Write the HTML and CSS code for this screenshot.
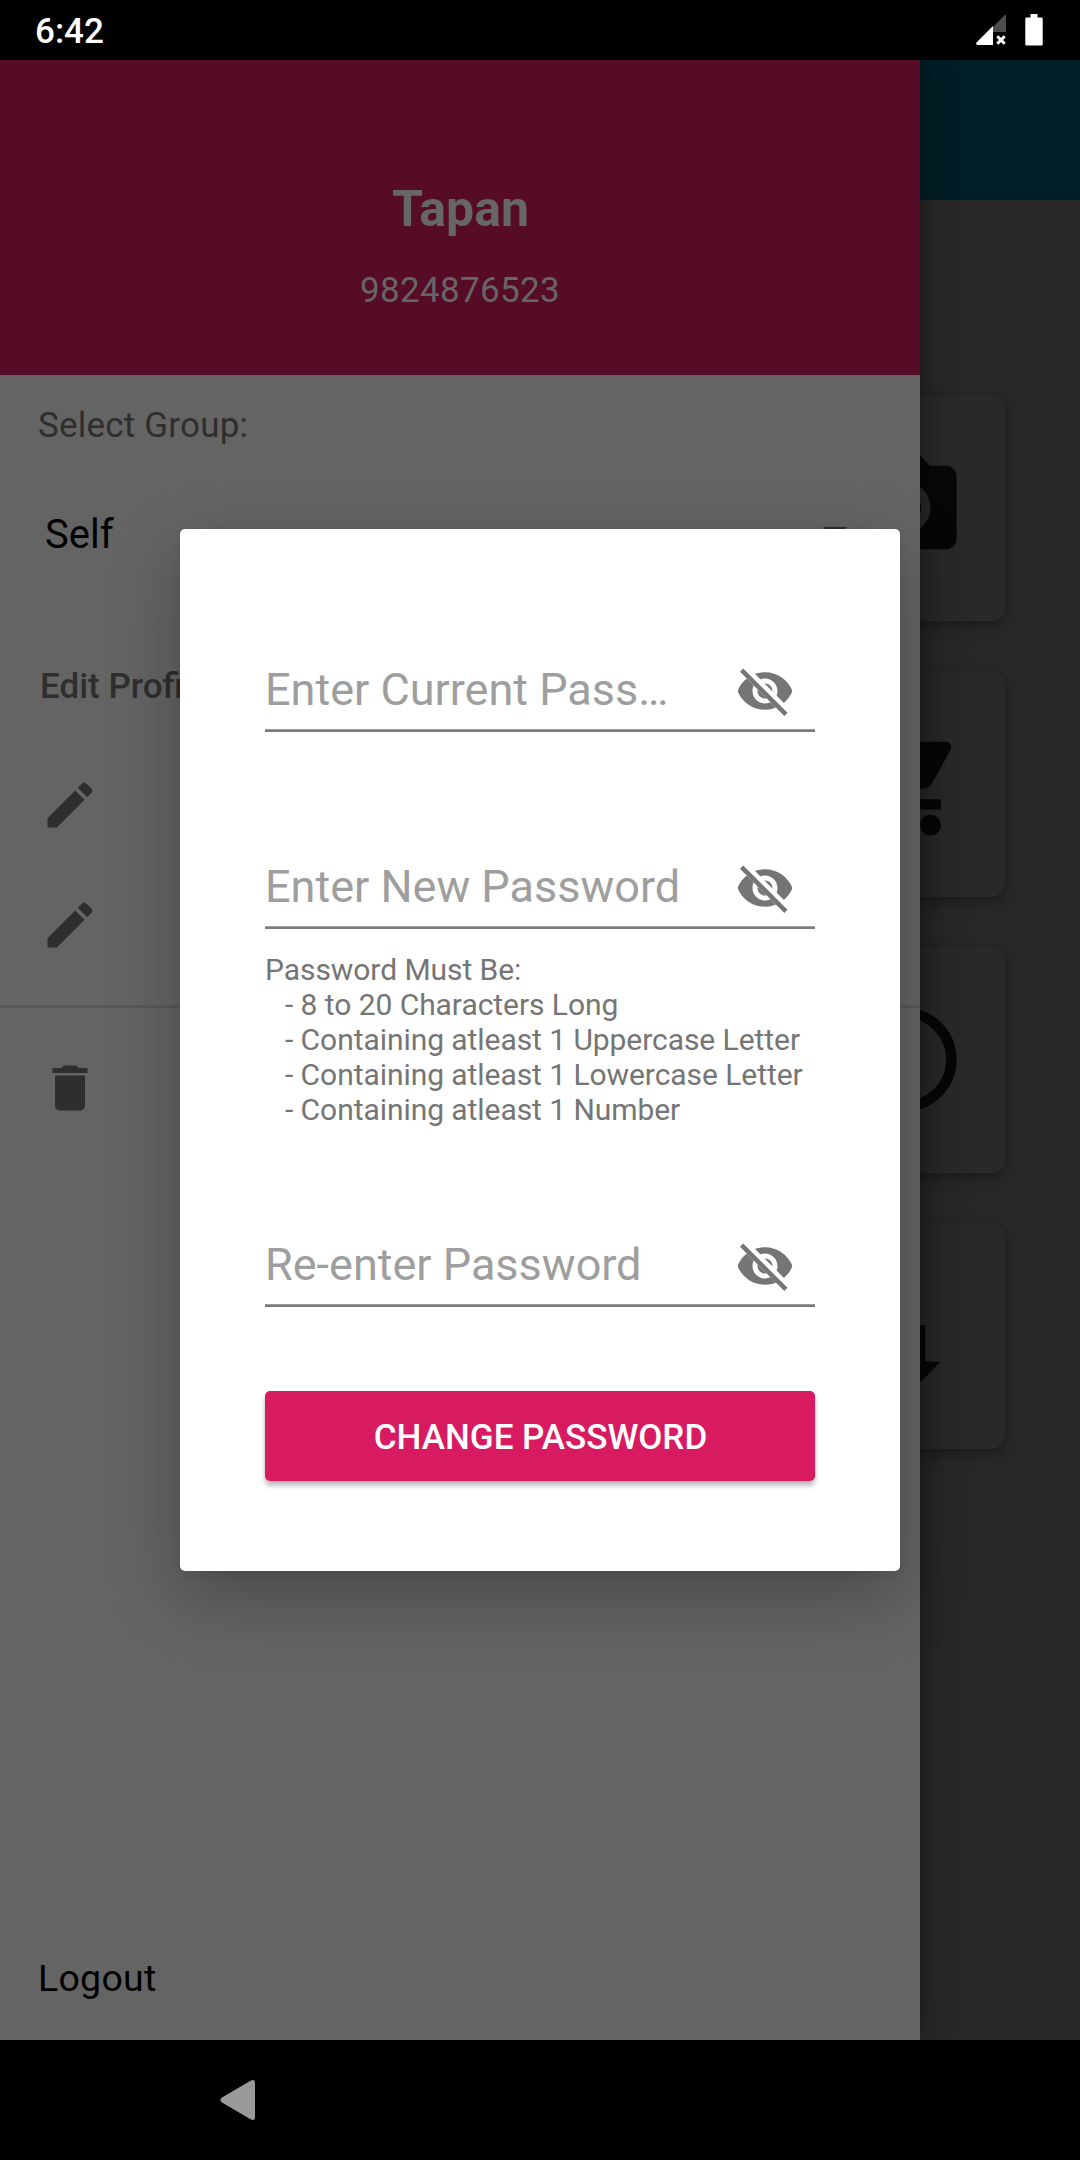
FILE: index.html
```html
<!DOCTYPE html>
<html lang="en">
<head>
<meta charset="utf-8">
<title>Change Password</title>
<link rel="stylesheet" href="styles.css">
</head>
<body>
<svg class="defs" width="0" height="0" aria-hidden="true">
  <defs>
    <clipPath id="eye-cut"><path d="M2 4.27 19.73 22 22.27 19.46 4.54 1.73V1H23V23H1V4.27Z"/></clipPath>
    <symbol id="eye-off" viewBox="0 0 24 24">
      <path clip-path="url(#eye-cut)" d="M12 4.5C7 4.5 2.73 7.61 1 12c1.73 4.39 6 7.5 11 7.5s9.27-3.11 11-7.5c-1.73-4.39-6-7.5-11-7.5zM12 17c-2.76 0-5-2.24-5-5s2.24-5 5-5 5 2.24 5 5-2.24 5-5 5zM12 9c-1.66 0-3 1.34-3 3s1.34 3 3 3 3-1.34 3-3-1.34-3-3-3z"/>
      <path d="M3.27 4.27 19.74 20.74" fill="none" stroke="#757575" stroke-width="1.8" stroke-linecap="square"/>
    </symbol>
    <symbol id="pencil" viewBox="0 0 24 24"><path d="M3 17.25V21h3.75L17.81 9.94l-3.75-3.75L3 17.25zM20.71 7.04c.39-.39.39-1.02 0-1.41l-2.34-2.34c-.39-.39-1.02-.39-1.41 0l-1.83 1.83 3.75 3.75 1.83-1.83z"/></symbol>
  </defs>
</svg>
<div class="phone">
  <header class="status">
    <span class="clock">6:42</span>
    <span class="status-icons">
      <svg width="30" height="31" viewBox="0 0 30 31"><path d="M30 2Q30 0 28.500 1.300L17 13V18H30z" fill="#4d4d4d"/><path d="M17 12V31H1.500Q-.5 30.500.5 28.500z" fill="#fff"/><path d="M21.300 22.300l7.400 7.400M28.700 22.300l-7.400 7.400" stroke="#fff" stroke-width="3"/></svg>
      <svg width="18" height="32" viewBox="0 0 18 32"><path d="M5.500 0h7v3.500H16.500q1.200 0 1.200 1.200V30.300q0 1.200-1.200 1.200H1.500Q.3 31.500.3 30.300V4.700Q.3 3.500 1.500 3.500h4z" fill="#fff"/></svg>
    </span>
  </header>

  <main class="screen">
    <div class="home">
      <div class="appbar"></div>
      <div class="tiles">
        <div class="tile"><svg class="tile-icon" viewBox="0 0 24 24"><circle cx="12" cy="12" r="3.200"/><path d="M9 2 7.170 4H4c-1.100 0-2 .9-2 2v12c0 1.100.9 2 2 2h16c1.100 0 2-.9 2-2V6c0-1.100-.9-2-2-2h-3.170L15 2H9zm3 15c-2.760 0-5-2.240-5-5s2.240-5 5-5 5 2.240 5 5-2.240 5-5 5z"/></svg></div>
        <div class="tile"><svg class="tile-icon" viewBox="0 0 24 24"><path d="M7 18c-1.100 0-1.990.9-1.990 2S5.900 22 7 22s2-.9 2-2-.9-2-2-2zM1 2v2h2l3.600 7.590-1.350 2.450c-.16.280-.25.610-.25.960 0 1.100.9 2 2 2h12v-2H7.420c-.14 0-.25-.11-.25-.25l.03-.12.9-1.630h7.450c.75 0 1.410-.41 1.750-1.030l3.580-6.490c.08-.14.12-.31.12-.48 0-.55-.45-1-1-1H5.210l-.94-2H1zm16 16c-1.100 0-1.990.9-1.990 2s.89 2 1.990 2 2-.9 2-2-.9-2-2-2z"/></svg></div>
        <div class="tile"><svg class="tile-icon" viewBox="0 0 24 24"><circle cx="12" cy="12" r="9" fill="none" stroke="#070707" stroke-width="2"/></svg></div>
        <div class="tile"><svg class="tile-icon" viewBox="0 0 24 24"><path d="M16 17.010V10h-2v7.010h-3L15 21l4-3.990h-3zM9 3 5 6.990h3V14h2V6.990h3L9 3z"/></svg></div>
      </div>
    </div>

    <aside class="drawer">
      <div class="profile">
        <div class="name">Tapan</div>
        <div class="number">9824876523</div>
      </div>
      <div class="group-label">Select Group:</div>
      <div class="spinner">
        <span>Self</span>
        <svg class="caret" width="24" height="12" viewBox="0 0 24 12"><path d="M0 0h24L12 12z" fill="#2d2d2d"/></svg>
      </div>
      <div class="section">Edit Profile</div>
      <div class="item"><svg class="item-icon"><use href="#pencil"/></svg></div>
      <div class="item"><svg class="item-icon"><use href="#pencil"/></svg></div>
      <div class="divider"></div>
      <div class="item item-delete"><svg class="item-icon" viewBox="0 0 24 24"><path d="M6 19c0 1.100.9 2 2 2h8c1.100 0 2-.9 2-2V7H6v12zM19 4h-3.500l-.7-.7q-.3-.3-.7-.3H9.900q-.4 0-.7.3l-.7.7H5v2h14V4z"/></svg></div>
      <div class="logout">Logout</div>
    </aside>

    <section class="dialog">
      <div class="field"><span class="hint">Enter Current Pass…</span><svg class="eye"><use href="#eye-off"/></svg></div>
      <div class="field field-new"><span class="hint">Enter New Password</span><svg class="eye"><use href="#eye-off"/></svg></div>
      <div class="rules">
        <div>Password Must Be:</div>
        <div class="rule">- 8 to 20 Characters Long</div>
        <div class="rule">- Containing atleast 1 Uppercase Letter</div>
        <div class="rule">- Containing atleast 1 Lowercase Letter</div>
        <div class="rule">- Containing atleast 1 Number</div>
      </div>
      <div class="field field-repeat"><span class="hint">Re-enter Password</span><svg class="eye"><use href="#eye-off"/></svg></div>
      <div class="button">CHANGE PASSWORD</div>
    </section>
  </main>

  <nav class="navbar">
    <svg width="35" height="40" viewBox="0 0 35 40"><path d="M2 17.500 30.500.8Q32 0 33.300 0 35 .3 35 2.500V37.500Q35 39.700 33.300 40 32 40 30.500 39.200L2 22.500Q-1.500 20 2 17.500z" fill="#999"/></svg>
  </nav>
</div>
</body>
</html>
```
FILE: styles.css
```css
* { box-sizing: border-box; }
body { margin: 0; background: #000; font-family: Roboto, "Liberation Sans", sans-serif; }
svg { display: block; flex: none; }
.defs { position: absolute; }
.phone { width: 1080px; height: 2160px; display: flex; flex-direction: column; overflow: hidden; white-space: nowrap; }

.status { height: 60px; background: #000; color: #fff; display: flex; justify-content: space-between; align-items: flex-start; padding: 0 37px 0 35px; }
.clock { font-size: 35px; font-weight: 500; line-height: 64px; }
.status-icons { display: flex; gap: 19px; padding-top: 14px; }

.screen { position: relative; height: 1980px; overflow: hidden; }
.home { height: 100%; background: #282828; }
.appbar { height: 140px; background: #001e26; }
.tiles { display: flex; flex-direction: column; align-items: flex-end; gap: 50px; padding: 195px 75px 0 0; }
.tile { width: 200px; height: 226px; border-radius: 14px; background: #292929; display: flex; align-items: center; justify-content: center; padding: 0 1px 1px 0; box-shadow: 0 6px 14px rgba(0, 0, 0, .26), 0 0 4px rgba(0, 0, 0, .1); }
.tile-icon { width: 125px; height: 125px; fill: #070707; }

.drawer { position: absolute; top: 0; left: 0; width: 920px; height: 1980px; background: #646464; color: #2e2e2e; display: flex; flex-direction: column; box-shadow: 4px 0 30px rgba(0, 0, 0, .38); }
.profile { height: 315px; padding-top: 119px; background: #560b26; color: #666; text-align: center; }
.name { padding-left: 1px; font-size: 50px; font-weight: 700; line-height: 60px; }
.number { margin-top: 32px; font-size: 35px; line-height: 40px; letter-spacing: .35px; }
.group-label { padding: 31px 0 0 38px; font-size: 35px; line-height: 40px; letter-spacing: .2px; }
.spinner { height: 100px; margin-top: 39px; padding: 0 73px 0 45px; display: flex; align-items: center; justify-content: space-between; color: #000; font-size: 40px; line-height: 48px; }
.caret { margin-bottom: 4px; }
.section { margin-top: 82px; padding-left: 40px; font-size: 35px; font-weight: 500; line-height: 40px; }
.item { height: 120px; padding: 0 40px; display: flex; align-items: center; }
.section + .item { margin-top: 38px; }
.item-icon { width: 60px; height: 60px; fill: #2e2e2e; }
.divider { height: 3px; margin-top: 20px; background: #595959; }
.item-delete { margin-top: 19.5px; }
.logout { margin-top: auto; padding: 0 0 42px 38px; color: #000; font-size: 37.5px; line-height: 40px; letter-spacing: .25px; }

.dialog { position: absolute; top: 469px; left: 180px; width: 720px; height: 1042px; padding: 124px 85px 90px; display: flex; flex-direction: column; background: #fff; border-radius: 5px; box-shadow: 0 25px 70px rgba(0, 0, 0, .27), 0 4px 10px rgba(0, 0, 0, .05); }
.field { height: 79px; padding-right: 20px; display: flex; align-items: flex-start; justify-content: space-between; border-bottom: 2px solid #7b7b7b; box-shadow: inset 0 -1px #9d9d9d; }
.hint { color: #9e9e9e; font-size: 45px; line-height: 74px; }
.eye { width: 60px; height: 60px; margin-top: 7.5px; fill: #757575; }
.field-new { margin-top: 118px; }
.rules { margin-top: 23px; color: #757575; font-size: 30px; line-height: 35px; letter-spacing: -.06px; }
.rule { padding-left: 20px; }
.field-repeat { margin-top: 101px; }
.button { height: 90px; margin-top: 84px; padding-left: 1px; border-radius: 5px; background: #d81b60; color: #fff; font-size: 35px; font-weight: 500; line-height: 94px; text-align: center; box-shadow: 0 5px 5px rgba(0, 0, 0, .24), 0 1px 3px rgba(0, 0, 0, .1); }

.navbar { height: 120px; padding: 40px 220px; background: #000; }
```
